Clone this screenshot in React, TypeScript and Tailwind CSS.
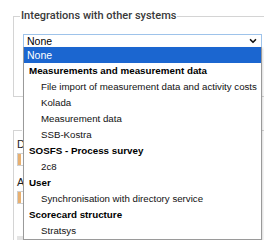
import { ChevronDown } from "lucide-react";

type Row = { label: string; kind: "selected" | "group" | "item" };

const rows: Row[] = [
  { label: "None", kind: "selected" },
  { label: "Measurements and measurement data", kind: "group" },
  { label: "File import of measurement data and activity costs", kind: "item" },
  { label: "Kolada", kind: "item" },
  { label: "Measurement data", kind: "item" },
  { label: "SSB-Kostra", kind: "item" },
  { label: "SOSFS - Process survey", kind: "group" },
  { label: "2c8", kind: "item" },
  { label: "User", kind: "group" },
  { label: "Synchronisation with directory service", kind: "item" },
  { label: "Scorecard structure", kind: "group" },
  { label: "Stratsys", kind: "item" },
];

export default function App() {
  return (
    <div className="relative w-[264px] h-[240px] overflow-hidden bg-white font-['Liberation_Sans',Arial,sans-serif] text-[#222]">
      <div className="pl-[13px] pt-[9px]">
        {/* Integrationer */}
        <fieldset className="h-[88px] border border-r-0 border-[#d4d4d4] pl-[6px] pr-0">
          <legend className="px-[1px] font-['Roboto',sans-serif] text-[11px] leading-[14px] font-medium text-[#3a3a3a]">
            Integrations with other systems
          </legend>
          <div className="mt-[11px] ml-[3px] flex h-[14px] w-[239px] items-center justify-between border border-[#9ec3ea] bg-white pl-[3px] pr-[3px] text-[10.5px] leading-[12px] text-black">
            <span>None</span>
            <ChevronDown size={10} strokeWidth={4} className="text-[#111]" />
          </div>
        </fieldset>

        {/* second fieldset, mostly hidden */}
        <fieldset className="mt-[26px] h-[200px] border border-r-0 border-[#d4d4d4] pl-[3px]">
          <legend className="ml-[5px] px-[1px] font-['Roboto',sans-serif] text-[11px] leading-[14px] font-medium text-[#3a3a3a]">
            Basic settings
          </legend>
          <div className="mt-[0px] text-[11px] leading-[14px] text-[#222]">Description</div>
          <div className="mt-[2px] flex h-[13px] w-[120px] border border-[#cfcfcf] bg-white">
            <div className="w-[3px] bg-[#e8b070]" />
          </div>
          <div className="mt-[9px] text-[11px] leading-[14px] text-[#222]">Administrator</div>
          <div className="mt-[2px] flex h-[13px] w-[120px] border border-[#cfcfcf] bg-white">
            <div className="w-[3px] bg-[#e8b070]" />
          </div>
          <div className="mt-[32px] h-[14px] w-[120px] bg-[#e4e4e4]" />
        </fieldset>
      </div>

      {/* open select list */}
      <div className="absolute left-[23px] top-[47px] w-[239px] border border-t-0 border-[#9a9a9a] bg-white shadow-[1px_1px_2px_rgba(0,0,0,0.15)]">
        {rows.map((r) => (
          <div
            key={r.label}
            className={
              r.kind === "selected"
                ? "h-[16px] bg-[#1b66d0] pl-[3px] text-[10.5px] leading-[16px] text-white"
                : r.kind === "group"
                ? "h-[16px] whitespace-nowrap pl-[5px] text-[9.8px] font-bold leading-[16px] text-black"
                : "h-[16px] whitespace-nowrap pl-[17px] text-[9.7px] leading-[16px] text-[#111]"
            }
          >
            {r.label}
          </div>
        ))}
      </div>
    </div>
  );
}
